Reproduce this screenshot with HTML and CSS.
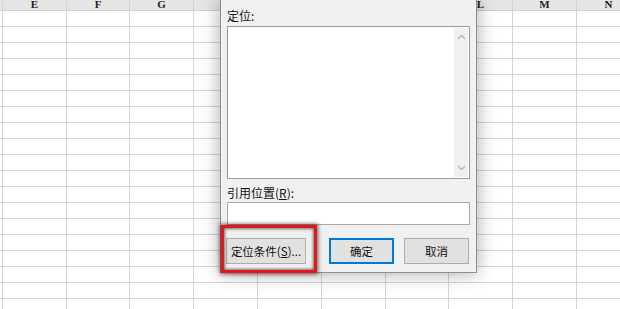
FILE: index.html
```html
<!DOCTYPE html>
<html lang="zh-CN">
<head>
    <meta charset="UTF-8">
    <title>定位</title>
    <link rel="stylesheet" href="styles.css">
</head>
<body>
    <div class="sheet">
        <div class="col edge"><div class="head"></div></div>
        <div class="col w64"><div class="head">E</div></div>
        <div class="col w63"><div class="head">F</div></div>
        <div class="col w64"><div class="head">G</div></div>
        <div class="col w64"><div class="head">H</div></div>
        <div class="col w64"><div class="head">I</div></div>
        <div class="col w64"><div class="head">J</div></div>
        <div class="col w63"><div class="head">K</div></div>
        <div class="col w64"><div class="head">L</div></div>
        <div class="col w64"><div class="head">M</div></div>
        <div class="col w64"><div class="head">N</div></div>
    </div>

    <div class="dialog">
        <div class="label">定位:</div>
        <div class="listbox">
            <div class="scrollbar">
                <svg width="9" height="6" viewBox="0 0 9 6"><path d="M1 5 L4.5 1.5 L8 5" fill="none" stroke="#b4b4b4" stroke-width="1.3"/></svg>
                <svg width="9" height="6" viewBox="0 0 9 6"><path d="M1 1 L4.5 4.5 L8 1" fill="none" stroke="#b4b4b4" stroke-width="1.3"/></svg>
            </div>
        </div>
        <div class="label ref">引用位置(<u>R</u>):</div>
        <div class="textbox"></div>
        <div class="buttons">
            <div class="btn special">定位条件(<u>S</u>)...</div>
            <div class="btn ok">确定</div>
            <div class="btn cancel">取消</div>
        </div>
    </div>

    <div class="highlight"></div>
</body>
</html>
```

FILE: styles.css
```css
:root {
    --grid-line: #d3d3d3;
    --dlg-bg: #f0f0f0;
    --btn-bg: #e1e1e1;
    --btn-border: #adadad;
    --accent: #0078d7;
    --font-ui: "Noto Sans CJK SC", "Noto Sans", sans-serif;
}

body {
    margin: 0;
    width: 620px;
    height: 309px;
    overflow: hidden;
    background: #fff;
    position: relative;
    font-family: var(--font-ui);
}

.sheet {
    display: flex;
    height: 309px;
}

.col {
    flex: none;
    border-right: 1px solid var(--grid-line);
    box-sizing: border-box;
    background: repeating-linear-gradient(to bottom, transparent 0 15px, var(--grid-line) 15px 16px);
    background-position: 0 11px;
    background-repeat: no-repeat;
    background-size: 100% 100%;
}
.col.edge { width: 3px; }
.col.w64 { width: 64px; }
.col.w63 { width: 63px; }

.head {
    height: 10px;
    background: #e6e6e6;
    border-bottom: 1px solid #cfcfcf;
    font-family: "Liberation Serif", serif;
    font-size: 11px;
    font-weight: bold;
    color: #222;
    text-align: center;
    line-height: 9px;
    overflow: hidden;
}

.dialog {
    position: absolute;
    left: 220px;
    top: -1px;
    width: 243px;
    padding: 8px 6px 8px;
    background: var(--dlg-bg);
    border: 1px solid #8e8e8e;
    box-shadow: 0 0 18px rgba(0, 0, 0, 0.34);
    display: flex;
    flex-direction: column;
    font-size: 12px;
    color: #111;
}

.label {
    height: 16px;
    line-height: 16px;
}
.label.ref { margin-top: 6px; }

.listbox {
    margin-top: 2px;
    height: 151px;
    background: #fff;
    border: 1px solid #9a9a9a;
    display: flex;
    justify-content: flex-end;
}

.scrollbar {
    width: 14px;
    margin: 1px 1px 1px 0;
    background: #f0f0f0;
    display: flex;
    flex-direction: column;
    justify-content: space-between;
    align-items: center;
    padding: 6px 0;
}

.textbox {
    margin-top: 1px;
    height: 21px;
    background: #fff;
    border: 1px solid #a8a8a8;
}

.buttons {
    margin-top: 13px;
    display: flex;
    font-size: 11.5px;
}

.btn {
    height: 24px;
    line-height: 24px;
    text-align: center;
    background: var(--btn-bg);
    border: 1px solid var(--btn-border);
}
.btn.special { width: 78px; margin-left: -1px; }
.btn.ok {
    width: 61px;
    margin-left: 23px;
    height: 22px;
    line-height: 22px;
    border: 2px solid var(--accent);
}
.btn.cancel { width: 63px; margin-left: 10px; }

.highlight {
    position: absolute;
    left: 221px;
    top: 225px;
    width: 90px;
    height: 42px;
    border: 3px solid #e8141a;
    box-shadow: 0 0 4px 1px rgba(0, 0, 0, 0.6), inset 0 0 3px 1px rgba(0, 0, 0, 0.55);
}
```
